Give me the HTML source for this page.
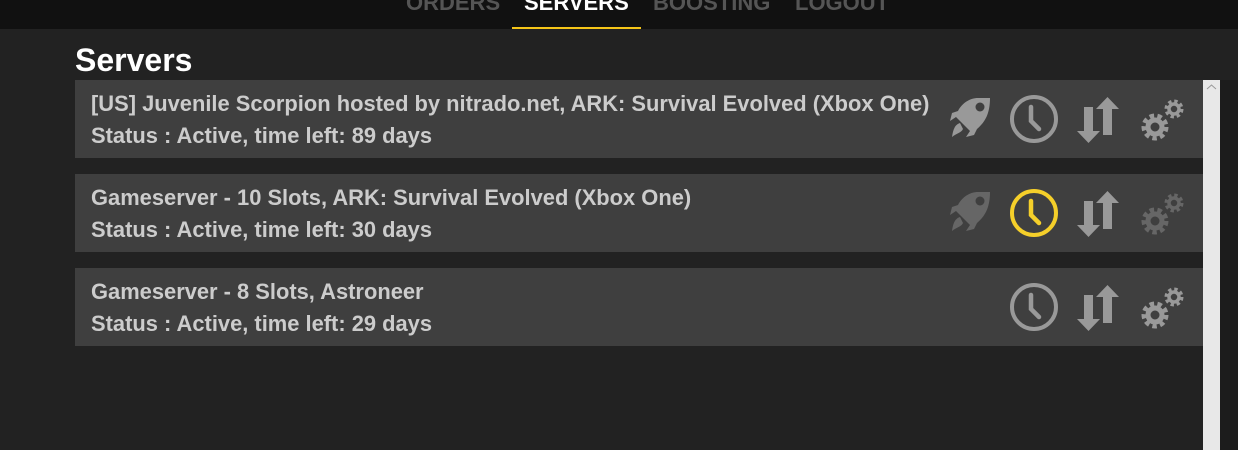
<!DOCTYPE html><html><head><style>
body{margin:0;width:1238px;height:450px;background:#222;overflow:hidden;font-family:"Liberation Sans",sans-serif;position:relative}
.nav{position:absolute;left:0;top:0;width:1238px;height:29px;background:#111}
.nav span{position:absolute;top:-10px;font-weight:bold;font-size:22px;color:#555}
.ul{position:absolute;left:512px;top:27px;width:129px;height:2px;background:#f5c518}
h1{position:absolute;left:75px;top:42px;margin:0;font-size:32px;color:#fff;font-weight:bold}
.row{position:absolute;left:75px;width:1128px;height:78px;background:#3f3f3f;color:#ccc;font-weight:bold;font-size:21.9px}
.row div{position:absolute;left:16px;white-space:nowrap}
.ic{position:absolute;top:15px}
.sb{position:absolute;left:1203px;top:80px;width:17px;height:370px;background:#e8e8e8}
.sd{position:absolute;left:1220px;top:80px;width:18px;height:370px;background:#1c1c1c}
</style></head><body>
<div class="nav"><span style="left:406px">ORDERS</span><span style="left:524px;color:#fff">SERVERS</span><span style="left:653px">BOOSTING</span><span style="left:795px">LOGOUT</span></div>
<div class="ul"></div>
<h1>Servers</h1>
<div class="sd"></div><div class="sb"><svg width="17" height="14"><path d="M4 9l4.5-4 4.5 4" stroke="#999" fill="none"/></svg></div>

<svg width="0" height="0" style="position:absolute"><defs>
<g id="rk"><path d="M30 3 C22 3 14 8 10 16 L4 18 L2 26 L8 22 L22 36 L18 42 L26 40 L29 34 C36 28 42 20 42 3Z"/><circle cx="32" cy="12" r="4.5" fill="#3f3f3f"/><path d="M12 28 C6 30 5 36 4 42 C9 38 13 38 15 34Z"/></g>
<g id="ck"><circle cx="24" cy="24" r="22" fill="none" stroke-width="4"/><path d="M21 12 V26 L29 34" fill="none" stroke-width="4.5" stroke-linecap="round"/></g>
<g id="ar"><path d="M9 12h9v24h7l-11.5 12L2 36h7z M28 40V14h-7L32.5 2 44 14h-7v26z"/></g>
<g id="gr"><circle cx="17" cy="32" r="10" fill="none" stroke-width="7" stroke-dasharray="4 3"/><circle cx="17" cy="32" r="7" fill="none" stroke-width="5"/><circle cx="36" cy="14" r="7" fill="none" stroke-width="5" stroke-dasharray="3 2.5"/><circle cx="36" cy="14" r="5" fill="none" stroke-width="3.5"/></g>
</defs></svg>

<div class="row" style="top:80px"><div style="top:11px">[US] Juvenile Scorpion hosted by nitrado.net, ARK: Survival Evolved (Xbox One)</div><div style="top:43px">Status : Active, time left: 89 days</div>
<svg class="ic" style="left:873px" width="48" height="48" fill="#999"><use href="#rk"/></svg>
<svg class="ic" style="left:935px" width="50" height="50" stroke="#999"><use href="#ck"/></svg>
<svg class="ic" style="left:1000px" width="48" height="48" fill="#999"><use href="#ar"/></svg>
<svg class="ic" style="left:1063px" width="50" height="48" stroke="#999"><use href="#gr"/></svg></div>

<div class="row" style="top:174px"><div style="top:11px">Gameserver - 10 Slots, ARK: Survival Evolved (Xbox One)</div><div style="top:43px">Status : Active, time left: 30 days</div>
<svg class="ic" style="left:873px" width="48" height="48" fill="#666"><use href="#rk"/></svg>
<svg class="ic" style="left:935px" width="50" height="50" stroke="#f5cf2a"><use href="#ck"/></svg>
<svg class="ic" style="left:1000px" width="48" height="48" fill="#999"><use href="#ar"/></svg>
<svg class="ic" style="left:1063px" width="50" height="48" stroke="#666"><use href="#gr"/></svg></div>

<div class="row" style="top:268px"><div style="top:11px">Gameserver - 8 Slots, Astroneer</div><div style="top:43px">Status : Active, time left: 29 days</div>
<svg class="ic" style="left:935px" width="50" height="50" stroke="#999"><use href="#ck"/></svg>
<svg class="ic" style="left:1000px" width="48" height="48" fill="#999"><use href="#ar"/></svg>
<svg class="ic" style="left:1063px" width="50" height="48" stroke="#999"><use href="#gr"/></svg></div>
</body></html>
